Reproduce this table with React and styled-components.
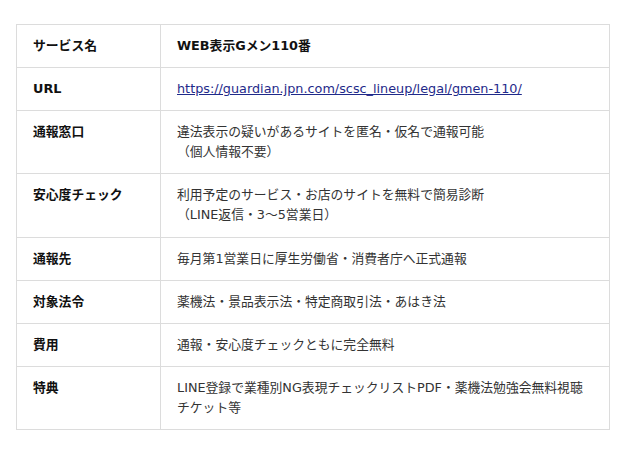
import React from 'react'
import styled, { createGlobalStyle } from 'styled-components'

const rows = [
  { label: 'サービス名', value: 'WEB表示Gメン110番', strong: true },
  {
    label: 'URL',
    value: 'https://guardian.jpn.com/scsc_lineup/legal/gmen-110/',
    href: 'https://guardian.jpn.com/scsc_lineup/legal/gmen-110/',
  },
  { label: '通報窓口', value: '違法表示の疑いがあるサイトを匿名・仮名で通報可能\n（個人情報不要）' },
  { label: '安心度チェック', value: '利用予定のサービス・お店のサイトを無料で簡易診断\n（LINE返信・3〜5営業日）' },
  { label: '通報先', value: '毎月第1営業日に厚生労働省・消費者庁へ正式通報' },
  { label: '対象法令', value: '薬機法・景品表示法・特定商取引法・あはき法' },
  { label: '費用', value: '通報・安心度チェックともに完全無料' },
  { label: '特典', value: 'LINE登録で業種別NG表現チェックリストPDF・薬機法勉強会無料視聴チケット等' },
]

const App = () => {
  return (
    <>
      <GlobalStyle />
      <Page>
        <Table>
          <colgroup>
            <col style={{ width: '144px' }} />
            <col />
          </colgroup>
          <tbody>
            {rows.map((row) => (
              <tr key={row.label}>
                <Label>{row.label}</Label>
                <Value $strong={row.strong}>
                  {row.href ? <UrlLink href={row.href}>{row.value}</UrlLink> : row.value}
                </Value>
              </tr>
            ))}
          </tbody>
        </Table>
      </Page>
    </>
  )
}
export default App

const GlobalStyle = createGlobalStyle`
  body{
    margin:0;
    background:#ffffff;
    font-family:"DejaVu Sans","Noto Sans CJK JP",sans-serif;
  }
`

const Page = styled.div`
  padding:24px 31px 24px 16px;
`

const Table = styled.table`
  width:594px;
  border-collapse:collapse;
  table-layout:fixed;
  font-size:12.8px;
  line-height:20.1px;

  td{
    border:1px solid #dcdcdc;
    padding:11px 16px;
    vertical-align:top;
  }
`

const Label = styled.td`
  font-weight:bold;
  color:#111111;
`

const Value = styled.td`
  color:#333333;
  white-space:pre-line;
  font-weight:${(p) => (p.$strong ? 'bold' : 'normal')};
  ${(p) => p.$strong && 'color:#111111;'}
`

const UrlLink = styled.a`
  color:#1f2a8a;
  text-decoration:underline;
`
